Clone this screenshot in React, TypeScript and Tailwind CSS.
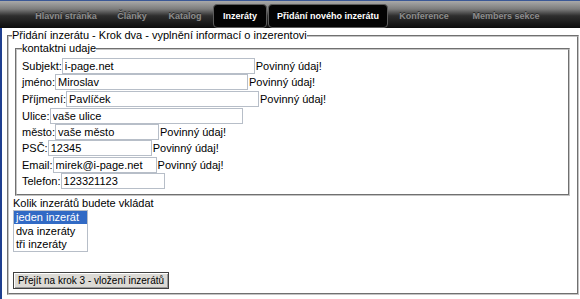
const menu = [
  { label: 'Hlavní stránka', w: 'w-[80px]', active: false },
  { label: 'Články', w: 'w-[52px]', active: false },
  { label: 'Katalog', w: 'w-[54px]', active: false },
  { label: 'Inzeráty', w: 'w-[54px] ml-[1px]', active: true },
  { label: 'Přidání nového inzerátu', w: 'w-[120px] ml-[1px]', active: true },
  { label: 'Konference', w: 'w-[72px]', active: false },
  { label: 'Members sekce', w: 'w-[92px]', active: false },
];

const rows = [
  { label: 'Subjekt:', value: 'i-page.net', long: true, req: true, mt: 'mt-[1px]' },
  { label: 'jméno:', value: 'Miroslav', long: true, req: true, mt: 'mt-0' },
  { label: 'Příjmení:', value: 'Pavlíček', long: true, req: true, mt: 'mt-[1px]' },
  { label: 'Ulice:', value: 'vaše ulice', long: true, req: false, mt: 'mt-[1px]' },
  { label: 'město:', value: 'vaše město', long: false, req: true, mt: 'mt-0' },
  { label: 'PSČ:', value: '12345', long: false, req: true, mt: 'mt-0' },
  { label: 'Email:', value: 'mirek@i-page.net', long: false, req: true, mt: 'mt-[1px]' },
  { label: 'Telefon:', value: '123321123', long: false, req: false, mt: 'mt-0' },
];

export default function App() {
  return (
    <div className="w-[580px] h-[299px] overflow-hidden bg-white text-[11px] leading-[13px] text-black font-['Liberation_Sans',Arial,sans-serif]">
      {/* top menu */}
      <div className="h-[28px] border-t border-[#3b5896] bg-[linear-gradient(#a9a9a9,#7c7c7c_30%,#2e2e2e_55%,#0d0d0d)] flex items-end pl-[26px]">
        {menu.map((m) => (
          <div
            key={m.label}
            className={
              m.active
                ? `${m.w} h-[24px] flex items-center justify-center rounded-[4px] border border-[#5c5c5c] bg-[#030303] text-white text-[9px] font-bold`
                : `${m.w} h-[24px] flex items-center justify-center text-[#8c8c8c] text-[9px] font-bold [text-shadow:0_-1px_0_#2a2a2a]`
            }
          >
            {m.label}
          </div>
        ))}
      </div>

      <div className="border-l-2 border-[#1f3f8f] h-[271px] pl-[5px] pt-[1px]">
        <fieldset className="w-[572px] border-2 border-[#c4c4c4] [border-style:groove] pl-[4px] pb-[4px]">
          <legend className="-ml-[1px] px-0">Přidání inzerátu - Krok dva - vyplnění informací o inzerentovi</legend>

          <fieldset className="ml-[2px] w-[555px] border-2 border-[#c4c4c4] [border-style:groove] pl-[5px] pt-[2px] pb-[5px]">
            <legend className="px-0">kontaktni udaje</legend>
            {rows.map((r) => (
              <div key={r.label} className={`flex items-center h-[16px] ${r.mt}`}>
                <span>{r.label}</span>
                <input
                  readOnly
                  value={r.value}
                  className={`${r.long ? 'w-[193px]' : 'w-[104px]'} h-[16px] border border-[#b7bec8] px-[2px] text-[11px] leading-[14px] outline-none bg-white`}
                />
                {r.req && <span className="ml-[1px]">Povinný údaj!</span>}
              </div>
            ))}
          </fieldset>

          <div className="mt-[1px] h-[13px]">Kolik inzerátů budete vkládat</div>
          <div className="w-[75px] h-[42px] border border-[#b7bec8]">
            <div className="h-[13px] bg-[#316ac5] text-white pl-[2px]">jeden inzerát</div>
            <div className="h-[13px] pl-[2px] mt-[1px]">dva inzeráty</div>
            <div className="h-[13px] pl-[2px]">tři inzeráty</div>
          </div>

          <button
            type="button"
            className="mt-[20px] w-[156px] h-[17px] px-0 whitespace-nowrap border border-[#404040] bg-[#dcdad5] shadow-[inset_1px_1px_0_#ffffff,inset_-1px_-1px_0_#9a9a9a] text-[10px] leading-[13px] text-center"
          >
            Přejít na krok 3 - vložení inzerátů
          </button>
        </fieldset>
      </div>
    </div>
  );
}
